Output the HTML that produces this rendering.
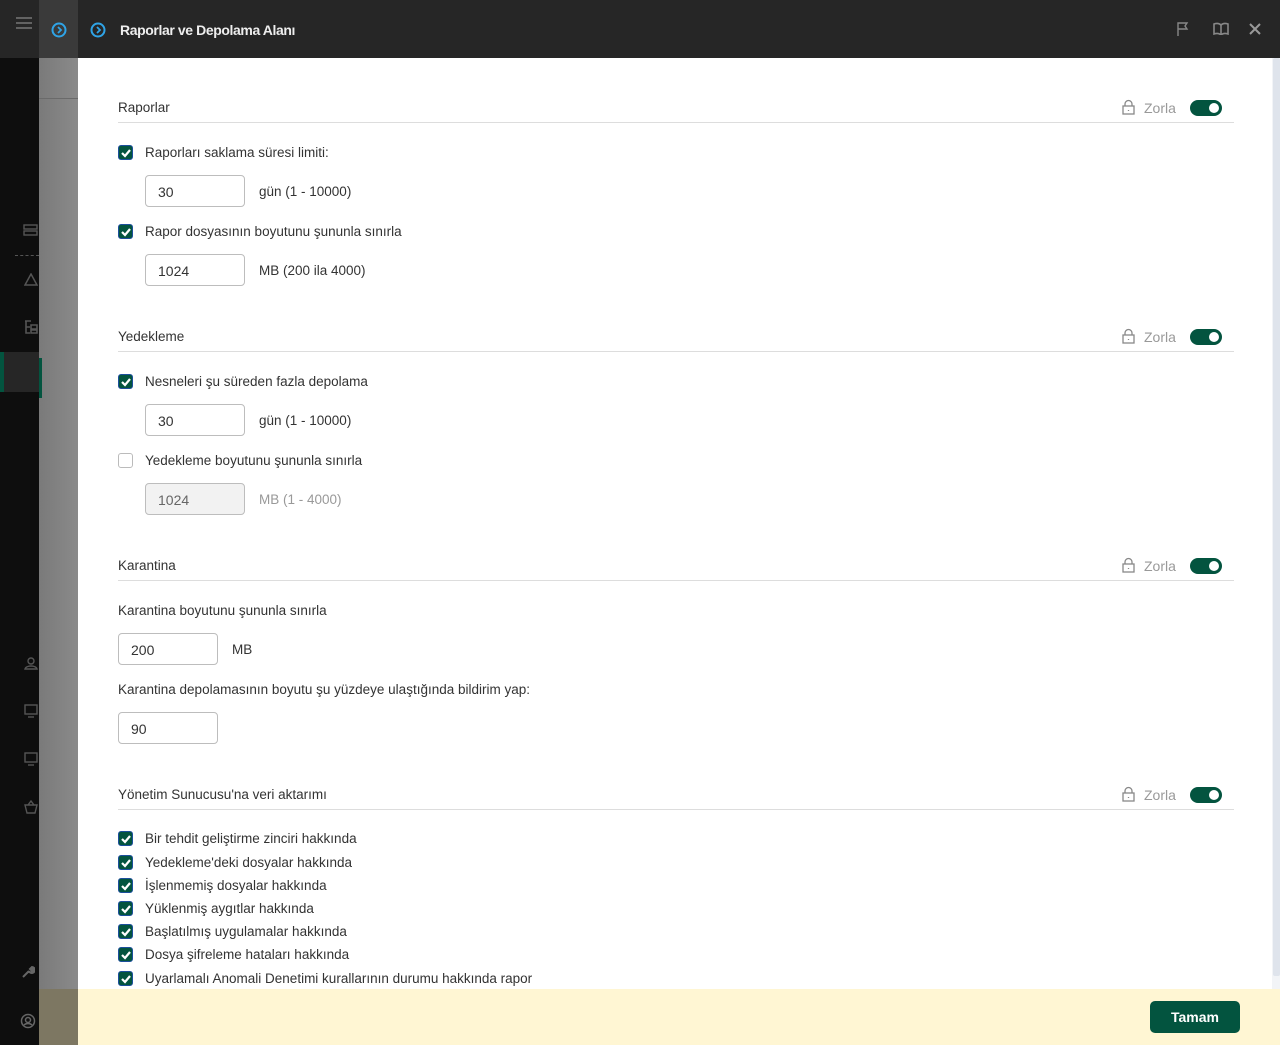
<!DOCTYPE html>
<html><head><meta charset="utf-8"><style>
*{margin:0;padding:0;box-sizing:border-box}
body{width:1280px;height:1045px;position:relative;overflow:hidden;font-family:"Liberation Sans",sans-serif;font-size:13.5px;color:#2d2d2d;background:#fff}
.a{position:absolute}
.sb{left:0;top:0;width:39px;height:1045px;background:#0e0e0e}
.ov{left:39px;top:58px;width:39px;height:931px;background:linear-gradient(90deg,#7a7a7a,#8a8a8a)}
.hd{left:0;top:0;width:1280px;height:58px;background:#262626}
.h{font-size:13.5px;color:#333;}
.line{height:1px;background:#ddd;left:118px;width:1116px}
.cb{width:15px;height:15px;border-radius:3px;background:#03543f;border:1.5px solid #1c4f9c}
.cb svg{position:absolute;left:1px;top:1px}
.cbo{width:15px;height:15px;border-radius:3px;border:1px solid #bbb;background:#fff}
.inp{width:100px;height:32px;border:1px solid #bdbdbd;border-radius:4px;padding:8px 12px;font-size:14px;color:#333;background:#fff}
.tg{width:32px;height:16px;border-radius:8px;background:#03543f}
.tg:after{content:"";position:absolute;right:3px;top:3px;width:10px;height:10px;border-radius:50%;background:#fff}
.zr{color:#999;font-size:14px}
.lbl{font-size:13.5px;color:#333}
.gr{color:#999}
</style></head><body>
<div class="a sb"></div>
<div class="a ov"></div>
<div class="a" style="left:39px;top:98px;width:39px;height:1px;background:#6a6a6a"></div>
<div class="a" style="left:0;top:352px;width:39px;height:40px;background:#262626;border-left:4px solid #03543f"></div>
<div class="a" style="left:39px;top:358px;width:3px;height:40px;background:#03543f"></div>
<div class="a" style="left:39px;top:989px;width:39px;height:56px;background:#7d7762"></div>
<div class="a hd"></div>
<div class="a" style="left:39px;top:0;width:39px;height:58px;background:#3a3a3a"></div>
<svg class="a" style="left:15px;top:16px" width="18" height="14"><path d="M1 2h16M1 7h16M1 12h16" stroke="#777" stroke-width="1.6"/></svg>
<svg class="a" style="left:51px;top:22px" width="16" height="16"><circle cx="8" cy="8" r="6.5" fill="none" stroke="#2fa4e7" stroke-width="2"/><path d="M7 5l3 3-3 3" fill="none" stroke="#2fa4e7" stroke-width="1.8"/></svg>
<svg class="a" style="left:90px;top:22px" width="16" height="16"><circle cx="8" cy="8" r="6.5" fill="none" stroke="#2fa4e7" stroke-width="2"/><path d="M7 5l3 3-3 3" fill="none" stroke="#2fa4e7" stroke-width="1.8"/></svg>
<div class="a" style="left:120px;top:22px;color:#eee;font-size:14px;font-weight:bold;letter-spacing:-0.4px">Raporlar ve Depolama Alanı</div>
<svg class="a" style="left:1176px;top:21px" width="14" height="16"><path d="M2 15V2h9l-2 3 2 3H2" fill="none" stroke="#888" stroke-width="1.4"/></svg>
<svg class="a" style="left:1213px;top:22px" width="17" height="13"><path d="M1 2c3-1 5-1 7 1 2-2 4-2 7-1v10c-3-1-5-1-7 1-2-2-4-2-7-1z M8 3v9" fill="none" stroke="#888" stroke-width="1.6"/></svg>
<svg class="a" style="left:1248px;top:22px" width="14" height="14"><path d="M2 2l10 10M12 2L2 12" stroke="#999" stroke-width="2"/></svg>
<svg class="a" style="left:23px;top:224px" width="15" height="14"><rect x="1" y="1" width="13" height="4" fill="none" stroke="#555" stroke-width="1.4"/><rect x="1" y="7" width="13" height="4" fill="none" stroke="#555" stroke-width="1.4"/></svg>
<div class="a" style="left:15px;top:255px;width:24px;border-top:1px dashed #555"></div>
<svg class="a" style="left:24px;top:273px" width="14" height="13"><path d="M7 1L13 12H1z" fill="none" stroke="#555" stroke-width="1.5"/></svg>
<svg class="a" style="left:24px;top:320px" width="14" height="14"><path d="M1 1h6M2 1v12h4M2 7h4M7 5h6v4H7zM7 10h6v3H7z" fill="none" stroke="#555" stroke-width="1.6"/></svg>
<svg class="a" style="left:24px;top:656px" width="14" height="14"><circle cx="7" cy="5" r="3" fill="none" stroke="#555" stroke-width="1.4"/><path d="M1 13c1-4 11-4 12 0z" fill="none" stroke="#555" stroke-width="1.4"/></svg>
<svg class="a" style="left:24px;top:704px" width="14" height="14"><rect x="1" y="1" width="12" height="9" fill="none" stroke="#555" stroke-width="1.4"/><path d="M4 13h6" stroke="#555" stroke-width="1.4"/></svg>
<svg class="a" style="left:24px;top:752px" width="14" height="14"><rect x="1" y="1" width="12" height="9" fill="none" stroke="#555" stroke-width="1.4"/><path d="M4 13h6" stroke="#555" stroke-width="1.4"/></svg>
<svg class="a" style="left:24px;top:800px" width="14" height="14"><path d="M1 5h12l-2 8H3zM4 5l3-4 3 4" fill="none" stroke="#555" stroke-width="1.4"/></svg>
<svg class="a" style="left:21px;top:965px" width="14" height="14"><path d="M2 12l6-6M8 6a3 3 0 1 0 3-4l-2 2 1 1 2-2a3 3 0 0 1-4 4" fill="none" stroke="#666" stroke-width="2"/></svg>
<svg class="a" style="left:20px;top:1013px" width="16" height="16"><circle cx="8" cy="8" r="6.5" fill="none" stroke="#666" stroke-width="1.5"/><circle cx="8" cy="7" r="2.5" fill="none" stroke="#666" stroke-width="1.5"/><path d="M4 12c2-2 6-2 8 0" fill="none" stroke="#666" stroke-width="1.5"/></svg>
<div class="a" style="left:1272px;top:58px;width:8px;height:931px;background:#f2f4f7"></div>
<div class="a" style="left:1273px;top:58px;width:7px;height:918px;background:#dfe4ec;border-radius:2px"></div>

<div id="c"></div>
<div class="a" style="left:78px;top:989px;width:1202px;height:56px;background:#fff6d3"></div>
<div class="a" style="left:1150px;top:1001px;width:90px;height:32px;background:#03543f;border-radius:5px;color:#fff;font-weight:bold;font-size:14px;text-align:center;line-height:32px">Tamam</div>
<script>
var h='';
function sec(y,t){h+='<div class="a h" style="left:118px;top:'+(y-7)+'px">'+t+'</div><div class="a line" style="top:'+(y+15)+'px"></div>'+
'<svg class="a" style="left:1122px;top:'+(y-8)+'px" width="13" height="16"><path d="M3 7V5a3.5 3.5 0 0 1 7 0v2" fill="none" stroke="#888" stroke-width="1.3"/><rect x="1" y="7" width="11" height="8" fill="none" stroke="#888" stroke-width="1.3"/><path d="M6.5 11v1" stroke="#888" stroke-width="1.3"/></svg>'+
'<div class="a zr" style="left:1144px;top:'+(y-7)+'px">Zorla</div><div class="a tg" style="left:1190px;top:'+(y-7)+'px"></div>';}
var ck='<svg width="12" height="12"><path d="M2 6l3 3 5-6" fill="none" stroke="#fff" stroke-width="2.2"/></svg>';
function cb(x,y,t,on,g){h+='<div class="a '+(on?'cb':'cbo')+'" style="left:'+x+'px;top:'+(y-7)+'px">'+(on?ck:'')+'</div><div class="a lbl" style="left:'+(x+27)+'px;top:'+(y-7)+'px">'+t+'</div>';}
function inp(x,y,v,u,dis){h+='<div class="a inp" style="left:'+x+'px;top:'+(y-16)+'px;'+(dis?'background:#f2f2f2;color:#666':'')+'">'+v+'</div>'+(u?'<div class="a lbl'+(dis?' gr':'')+'" style="left:'+(x+114)+'px;top:'+(y-7)+'px">'+u+'</div>':'');}
function tx(x,y,t){h+='<div class="a lbl" style="left:'+x+'px;top:'+(y-7)+'px">'+t+'</div>';}
sec(107,'Raporlar');
cb(118,152,'Raporları saklama süresi limiti:',1);
inp(145,191,'30','gün (1 - 10000)');
cb(118,231,'Rapor dosyasının boyutunu şununla sınırla',1);
inp(145,270,'1024','MB (200 ila 4000)');
sec(336,'Yedekleme');
cb(118,381,'Nesneleri şu süreden fazla depolama',1);
inp(145,420,'30','gün (1 - 10000)');
cb(118,460,'Yedekleme boyutunu şununla sınırla',0);
inp(145,499,'1024','MB (1 - 4000)',1);
sec(565,'Karantina');
tx(118,610,'Karantina boyutunu şununla sınırla');
inp(118,649,'200','MB');
tx(118,689,'Karantina depolamasının boyutu şu yüzdeye ulaştığında bildirim yap:');
inp(118,728,'90','');
sec(794,'Yönetim Sunucusu\'na veri aktarımı');
var L=[[838,'Bir tehdit geliştirme zinciri hakkında'],[862,'Yedekleme\'deki dosyalar hakkında'],[885,'İşlenmemiş dosyalar hakkında'],[908,'Yüklenmiş aygıtlar hakkında'],[931,'Başlatılmış uygulamalar hakkında'],[954,'Dosya şifreleme hataları hakkında'],[978,'Uyarlamalı Anomali Denetimi kurallarının durumu hakkında rapor']];
L.forEach(function(a){cb(118,a[0],a[1],1)});
document.getElementById('c').innerHTML=h;
</script>
</body></html>
